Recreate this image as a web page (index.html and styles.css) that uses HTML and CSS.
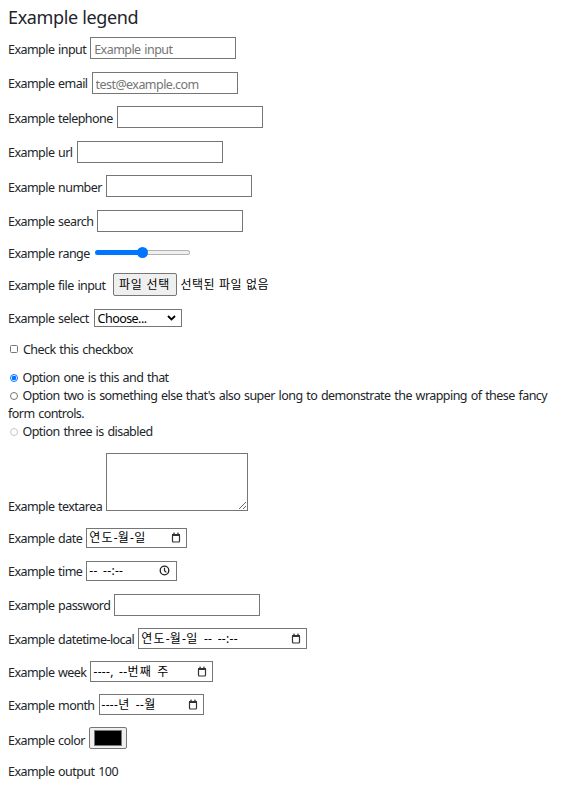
FILE: index.html
```html
<!DOCTYPE html>
<html lang="ko">
<head>
<meta charset="utf-8">
<title>Form</title>
<link rel="stylesheet" href="styles.css">
</head>
<body>
<form class="form">
  <fieldset class="fieldset">
    <legend class="legend">Example legend</legend>

    <div class="row"><label class="lbl" for="f-input">Example input</label><input class="field" id="f-input" type="text" placeholder="Example input"></div>
    <div class="row"><label class="lbl" for="f-email">Example email</label><input class="field" id="f-email" type="email" placeholder="test@example.com"></div>
    <div class="row"><label class="lbl" for="f-tel">Example telephone</label><input class="field" id="f-tel" type="tel"></div>
    <div class="row"><label class="lbl" for="f-url">Example url</label><input class="field" id="f-url" type="url"></div>
    <div class="row"><label class="lbl" for="f-number">Example number</label><input class="field" id="f-number" type="number"></div>
    <div class="row"><label class="lbl" for="f-search">Example search</label><input class="field" id="f-search" type="search"></div>
    <div class="row row-range"><label class="lbl" for="f-range">Example range</label><input class="range" id="f-range" type="range" min="0" max="100" value="50"></div>
    <div class="row row-file"><span class="lbl">Example file input</span><span class="filebtn">파일 선택</span><span class="ko filetext">선택된 파일 없음</span></div>
    <div class="row row-select"><label class="lbl" for="f-select">Example select</label>
      <span class="select-wrap">
        <select class="select" id="f-select"><option>Choose...</option><option>1</option><option>2</option></select>
        <svg class="chev" width="9" height="6" viewBox="0 0 9 6"><polyline points="1,1 4.5,4.5 8,1" fill="none" stroke="#000" stroke-width="1.8"/></svg>
      </span>
    </div>
    <div class="check-row"><input class="check" id="f-check" type="checkbox"><label class="opt-lbl" for="f-check">Check this checkbox</label></div>

    <div class="radios">
      <div class="opt"><input class="radio" type="radio" name="r" id="r1" checked><label for="r1">Option one is this and that</label></div>
      <div class="opt"><input class="radio" type="radio" name="r" id="r2"><label for="r2">Option two is something else that's also super long to demonstrate the wrapping of these fancy form controls.</label></div>
      <div class="opt"><input class="radio" type="radio" name="r" id="r3" disabled><label for="r3">Option three is disabled</label></div>
    </div>

    <div class="row row-textarea"><label class="lbl" for="f-ta">Example textarea</label><textarea class="ta" id="f-ta"></textarea></div>

    <div class="row"><span class="lbl">Example date</span>
      <span class="pseudo w-date"><span class="val"><span class="hg">연도</span>-<span class="hg">월</span>-<span class="hg">일</span></span>
        <svg class="ico" width="10" height="11" viewBox="0 0 10 11"><rect x="1.5" y="2.5" width="7" height="7.5" rx="1" fill="none" stroke="#333" stroke-width="1.2"/><rect x="1" y="2" width="8" height="2" fill="#333"/><rect x="2.4" y="0.6" width="1.3" height="2" fill="#333"/><rect x="6.3" y="0.6" width="1.3" height="2" fill="#333"/></svg></span></div>
    <div class="row"><span class="lbl">Example time</span>
      <span class="pseudo w-time"><span class="val">-- --:--</span>
        <svg class="ico" width="11" height="11" viewBox="0 0 11 11"><circle cx="5.5" cy="5.5" r="4.3" fill="none" stroke="#222" stroke-width="1.3"/><polyline points="5.5,2.8 5.5,5.7 7.4,7.4" fill="none" stroke="#222" stroke-width="1.2"/></svg></span></div>
    <div class="row"><label class="lbl" for="f-pw">Example password</label><input class="field" id="f-pw" type="password"></div>
    <div class="row"><span class="lbl">Example datetime-local</span>
      <span class="pseudo w-dtl"><span class="val"><span class="hg">연도</span>-<span class="hg">월</span>-<span class="hg">일</span> -- --:--</span>
        <svg class="ico" width="10" height="11" viewBox="0 0 10 11"><rect x="1.5" y="2.5" width="7" height="7.5" rx="1" fill="none" stroke="#333" stroke-width="1.2"/><rect x="1" y="2" width="8" height="2" fill="#333"/><rect x="2.4" y="0.6" width="1.3" height="2" fill="#333"/><rect x="6.3" y="0.6" width="1.3" height="2" fill="#333"/></svg></span></div>
    <div class="row"><span class="lbl">Example week</span>
      <span class="pseudo w-week"><span class="val">----, --<span class="hg">번째</span> <span class="hg">주</span></span>
        <svg class="ico" width="10" height="11" viewBox="0 0 10 11"><rect x="1.5" y="2.5" width="7" height="7.5" rx="1" fill="none" stroke="#333" stroke-width="1.2"/><rect x="1" y="2" width="8" height="2" fill="#333"/><rect x="2.4" y="0.6" width="1.3" height="2" fill="#333"/><rect x="6.3" y="0.6" width="1.3" height="2" fill="#333"/></svg></span></div>
    <div class="row"><span class="lbl">Example month</span>
      <span class="pseudo w-month"><span class="val">----<span class="hg">년</span> --<span class="hg">월</span></span>
        <svg class="ico" width="10" height="11" viewBox="0 0 10 11"><rect x="1.5" y="2.5" width="7" height="7.5" rx="1" fill="none" stroke="#333" stroke-width="1.2"/><rect x="1" y="2" width="8" height="2" fill="#333"/><rect x="2.4" y="0.6" width="1.3" height="2" fill="#333"/><rect x="6.3" y="0.6" width="1.3" height="2" fill="#333"/></svg></span></div>
    <div class="row row-color"><label class="lbl lbl-low" for="f-color">Example color</label><input class="color" id="f-color" type="color" value="#000000"></div>
    <div class="row"><span class="lbl">Example output <output>100</output></span></div>
  </fieldset>
</form>
</body>
</html>
```
FILE: styles.css
```css
* { box-sizing: border-box; }

body {
  margin: 8px;
  background: #fff;
  color: #212529;
  font-family: "Noto Sans", "Noto Sans CJK KR", sans-serif;
  font-size: 12.5px;
  line-height: 16px;
  letter-spacing: -0.55px;
  word-spacing: 1px;
}

.form { margin: 0; }

.fieldset {
  margin: 0;
  padding: 0;
  border: 0;
  min-width: 0;
}

.legend {
  float: left;
  width: 100%;
  padding: 0;
  margin: 0 0 11px;
  font-size: 18px;
  line-height: 18px;
  letter-spacing: -0.35px;
  word-spacing: 0;
  color: #212529;
}

.row {
  clear: left;
  display: flex;
  align-items: center;
  gap: 4px;
  margin-bottom: 12.5px;
}

.lbl {
  white-space: nowrap;
  padding-top: 3px;
}
.lbl-low {
  align-self: flex-end;
  padding-top: 0;
}

.ko {
  font-family: "Noto Sans CJK KR", "Noto Sans", sans-serif;
  letter-spacing: 0.5px;
  word-spacing: 0;
  font-size: 12px;
}

.field {
  width: 146px;
  height: 22px;
  margin: 0;
  padding: 3px 3px 0;
  border: 1px solid #767676;
  border-radius: 0;
  background: #fff;
  color: #000;
  font: inherit;
  letter-spacing: inherit;
  word-spacing: inherit;
  outline: none;
}
.field::placeholder { color: #757575; opacity: 1; }

/* range */
.row-range { height: 16px; }
.range {
  -webkit-appearance: none;
  appearance: none;
  width: 95px;
  height: 16px;
  margin: 0 0 0 1px;
  background: transparent;
}
.range::-webkit-slider-runnable-track {
  height: 5px;
  border: 1px solid transparent;
  border-radius: 3px;
  background:
    linear-gradient(#0075ff, #0075ff) 0 0 / 52% 100% no-repeat border-box,
    linear-gradient(#efefef, #efefef) padding-box,
    linear-gradient(#b2b2b2, #b2b2b2) border-box;
}
.range::-webkit-slider-thumb {
  -webkit-appearance: none;
  width: 11px;
  height: 11px;
  margin-top: -4px;
  border: 0;
  border-radius: 50%;
  background: #0075ff;
}

/* file */
.row-file { height: 23px; }
.filebtn {
  display: flex;
  align-items: center;
  justify-content: center;
  width: 64px;
  height: 23px;
  margin-left: 3px;
  border: 1px solid #767676;
  border-radius: 2px;
  background: #efefef;
  color: #000;
  font-family: "Noto Sans CJK KR", "Noto Sans", sans-serif;
  font-size: 12px;
  letter-spacing: 0.7px;
  word-spacing: 0;
}
.filetext { color: #000; }

/* select */
.select-wrap {
  position: relative;
  display: block;
  width: 88px;
  height: 18px;
  margin-left: 1px;
}
.select {
  -webkit-appearance: none;
  appearance: none;
  display: block;
  width: 100%;
  height: 100%;
  margin: 0;
  padding: 1px 16px 0 3px;
  border: 1px solid #767676;
  border-radius: 0;
  background: #fff;
  color: #000;
  font: inherit;
  letter-spacing: inherit;
  line-height: 15px;
}
.chev {
  position: absolute;
  right: 6px;
  top: 6px;
  pointer-events: none;
}

/* checkbox */
.check-row {
  display: flex;
  align-items: center;
  height: 18px;
  margin: 1px 0 11px;
}
.check {
  -webkit-appearance: none;
  appearance: none;
  width: 8px;
  height: 8px;
  margin: 0 5px 0 2px;
  border: 1px solid #767676;
  border-radius: 1.5px;
  background: #fff;
}
.opt-lbl { padding-top: 2px; }

/* radios */
.radios { margin-bottom: 12px; }
.opt { line-height: 18px; }
.radio {
  -webkit-appearance: none;
  appearance: none;
  display: inline-block;
  width: 8px;
  height: 8px;
  margin: 0 4.5px 0 2px;
  vertical-align: -0.5px;
  border: 1px solid #767676;
  border-radius: 50%;
  background: #fff;
}
.radio:checked {
  border-color: #0075ff;
  background: radial-gradient(circle, #0075ff 0 2px, #fff 2.6px);
}
.radio:disabled { border-color: #c8c8c8; }

/* textarea */
.row-textarea { align-items: flex-end; }
.row-textarea .lbl { padding-top: 0; }
.ta {
  width: 142px;
  height: 58.5px;
  margin: 0 0 4px;
  padding: 2px;
  border: 1px solid #767676;
  border-radius: 0;
  font: inherit;
  resize: both;
}

/* date-like pseudo controls */
.pseudo {
  display: flex;
  align-items: center;
  justify-content: space-between;
  height: 20.5px;
  padding: 1px 5px 0 2px;
  border: 1px solid #767676;
  background: #fff;
  color: #000;
}
.pseudo .val {
  font-size: 12px;
  letter-spacing: 0.3px;
  word-spacing: 2px;
  white-space: pre;
}
.pseudo .hg { letter-spacing: 1.2px; }
.pseudo .ico { flex: none; margin-top: -1px; }
.w-date { width: 101px; }
.w-time { width: 91px; padding-right: 6px; }
.w-dtl { width: 169px; }
.w-week { width: 123px; }
.w-month { width: 105px; }

/* color */
.row-color { margin-bottom: 12px; }
.color {
  -webkit-appearance: none;
  appearance: none;
  width: 38px;
  height: 22px;
  margin: 0;
  padding: 2px 4px;
  border: 1px solid #767676;
  border-radius: 2px;
  background: #efefef;
}
.color::-webkit-color-swatch-wrapper { padding: 0; }
.color::-webkit-color-swatch { border: 1px solid #777; border-radius: 0; }
```
